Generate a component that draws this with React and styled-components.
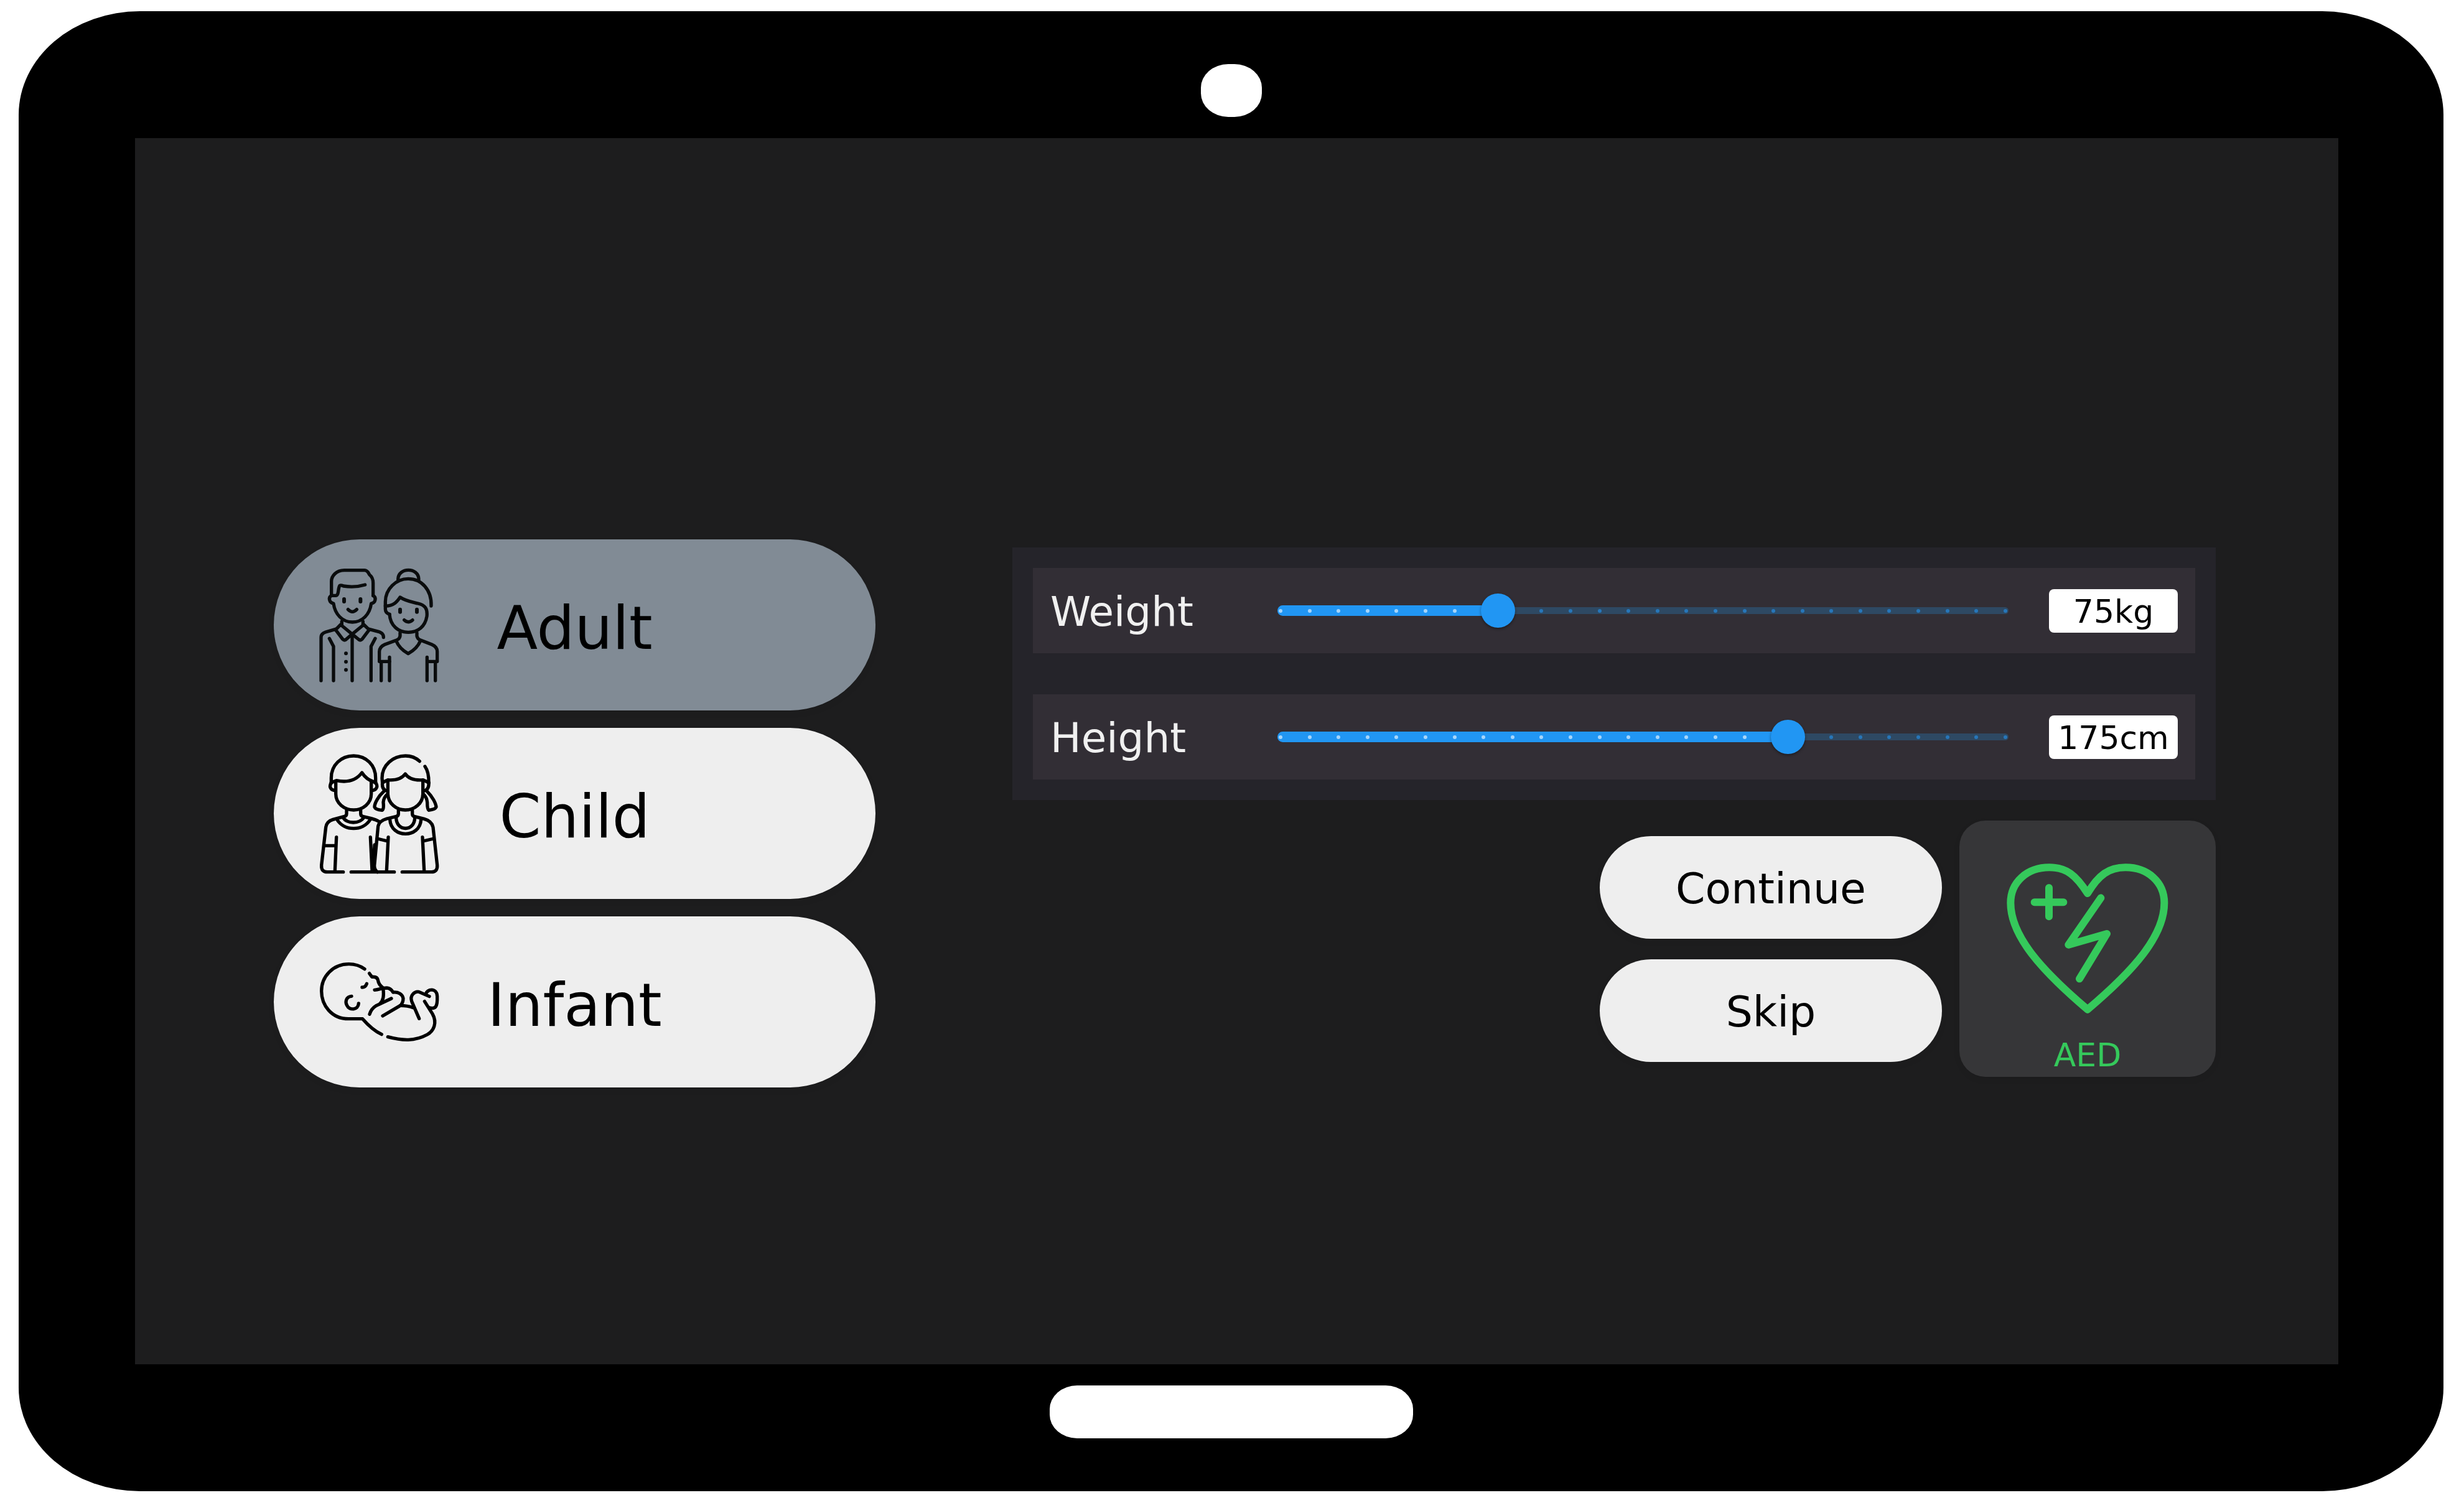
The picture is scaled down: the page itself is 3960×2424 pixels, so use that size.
import React, { useState } from "react";
import styled, { createGlobalStyle } from "styled-components";

const GlobalStyle = createGlobalStyle`
  *, *::before, *::after { box-sizing: border-box; }
  html, body { margin: 0; background: #ffffff; }
  body, button, output, input { font-family: "DejaVu Sans", sans-serif; }
`;

const Page = styled.div`
  display: flex;
  min-height: 100vh;
  padding: 18px 33px 27px 30px;
`;

const Tablet = styled.div`
  flex: 1;
  display: grid;
  grid-template-rows: 204px 1fr 204px;
  padding: 0 169px 0 187px;
  border-radius: 5% / 7%;
  background: #000000;
`;

const Bezel = styled.div`
  display: flex;
  justify-content: center;
  align-items: ${(p) => (p.$edge === "top" ? "flex-end" : "flex-start")};
  padding: 34px 18px 34px 0;
`;

const Cutout = styled.div`
  width: ${(p) => p.$width}px;
  height: 85px;
  border-radius: 44px / 38px;
  background: #ffffff;
`;

const Screen = styled.main`
  display: grid;
  grid-template-columns: minmax(0, 1fr) minmax(0, 2fr);
  column-gap: 220px;
  align-items: center;
  padding: 200px 197px 0 223px;
  background: #1d1d1e;
`;

const OptionList = styled.div`
  display: flex;
  flex-direction: column;
  gap: 28px;
`;

const Option = styled.button`
  display: grid;
  grid-template-columns: 1fr auto 1fr;
  align-items: center;
  height: 275px;
  padding: 0 50px;
  border: 0;
  border-radius: 138px;
  background: ${(p) => (p.$selected ? "#818b95" : "#eeeeee")};
  color: #000000;
  font-size: 96px;
  line-height: 112px;
  box-shadow: 0 4px 12px rgba(0, 0, 0, 0.06);
  cursor: pointer;
`;

const OptionText = styled.span`
  padding-top: 10px;
`;

const LineArt = styled.svg`
  display: block;
  width: 240px;
  height: 220px;
  fill: none;
  stroke: ${(p) => p.$ink};
  stroke-width: 16;
  stroke-linecap: round;
  stroke-linejoin: round;
`;

const Details = styled.div`
  display: flex;
  flex-direction: column;
  gap: 33px;
  padding-bottom: 4px;
`;

const Panel = styled.section`
  display: flex;
  flex-direction: column;
  gap: 66px;
  padding: 33px;
  background: #25242a;
`;

const Row = styled.div`
  display: flex;
  align-items: center;
  height: 137px;
  padding: 0 28px;
  background: #322e35;
`;

const RowLabel = styled.label`
  flex: 0 0 343px;
  padding-top: 4px;
  color: #f0f0f0;
  font-size: 66px;
  line-height: 76px;
`;

const Slider = styled.div`
  flex: 1;
  display: grid;
  align-items: center;
  margin-right: 43px;

  > * { grid-area: 1 / 1; }
`;

const Rail = styled.div`
  height: 11px;
  margin: 0 22px;
  border-radius: 6px;
  background: #2e4963;
`;

const FillLane = styled.div`
  margin: 0 22px;
`;

const Fill = styled.div`
  height: 17px;
  border-radius: 9px;
  background: #2196f3;
`;

const Ticks = styled.div`
  display: flex;
  justify-content: space-between;
  margin: 0 24px;
`;

const Tick = styled.span`
  width: 6px;
  height: 6px;
  border-radius: 50%;
  background: ${(p) => (p.$passed ? "#a6d5fa" : "#2776b9")};
`;

const Range = styled.input`
  appearance: none;
  width: 100%;
  height: 56px;
  margin: 0;
  background: transparent;
  cursor: pointer;

  &::-webkit-slider-runnable-track {
    height: 55px;
    background: transparent;
  }

  &::-webkit-slider-thumb {
    appearance: none;
    width: 55px;
    height: 55px;
    border-radius: 50%;
    background: #2196f3;
    box-shadow: 0 2px 4px rgba(0, 0, 0, 0.4);
  }
`;

const Value = styled.output`
  flex: 0 0 207px;
  height: 70px;
  border-radius: 8px;
  background: #ffffff;
  color: #000000;
  font-size: 52px;
  line-height: 72px;
  text-align: center;
`;

const Actions = styled.div`
  display: flex;
  justify-content: flex-end;
  align-items: center;
  gap: 28px;
`;

const ActionStack = styled.div`
  display: flex;
  flex-direction: column;
  gap: 33px;
`;

const Action = styled.button`
  width: 550px;
  height: 165px;
  padding: 4px 0 0;
  border: 0;
  border-radius: 83px;
  background: #eeeeee;
  color: #000000;
  font-size: 68px;
  box-shadow: 0 4px 12px rgba(0, 0, 0, 0.06);
  cursor: pointer;
`;

const AedCard = styled.button`
  display: flex;
  flex-direction: column;
  align-items: center;
  justify-content: flex-start;
  gap: 28px;
  width: 412px;
  height: 412px;
  padding: 59px 0 0;
  border: 0;
  border-radius: 42px;
  background: #363638;
  color: #35c95b;
  font-size: 52px;
  line-height: 60px;
  box-shadow: 0 4px 12px rgba(0, 0, 0, 0.06);
  cursor: pointer;
`;

const HeartArt = styled.svg`
  display: block;
  width: 280px;
  height: 260px;
  fill: none;
  stroke: currentColor;
  stroke-width: 36;
  stroke-linecap: round;
  stroke-linejoin: round;
`;

const AdultIcon = () => (
  <LineArt $ink="#0a0c0d" viewBox="0 13 720 660" aria-hidden="true">
    {/* man */}
    <path d="M128 200V132C128 105 152 78 190 78H288C303 78 306 92 312 100C325 110 329 122 329 140V200" />
    <path d="M128 200H148C166 200 158 165 168 152Q174 149 186 154Q240 163 290 148" />
    <path d="M128 200C112 208 116 234 138 238C145 290 180 328 229 328C278 328 313 290 320 238C342 234 345 208 329 200" />
    <path strokeWidth="18" d="M189 217v12M268 217v12" />
    <path d="M208 267Q229 289 250 267M178 325V340M280 325V340" />
    <path d="M172 340L148 365L182 410Q190 418 198 412L228 386ZM284 340L310 365L276 410Q268 418 260 412L228 386Z" />
    <path d="M228 386V610M148 362L100 376Q78 383 78 402V610M310 362L355 374Q380 382 379 402" />
    <path d="M118 407L138 445V610M339 407L319 445V610" />
    <g fill="#0a0c0d" stroke="none">
      <circle cx="198" cy="479" r="9" />
      <circle cx="198" cy="519" r="9" />
      <circle cx="198" cy="558" r="9" />
    </g>
    {/* woman */}
    <path d="M449 122C449 62 549 62 549 122" />
    <path d="M408 290Q388 284 388 265V230C388 168 440 119 498 119C562 119 612 172 609 250" />
    <path d="M388 250C430 250 445 228 459 208C485 226 512 230 545 238C580 246 592 264 588 300C580 350 545 377 499 377C450 377 412 345 408 290" />
    <path strokeWidth="18" d="M459 267v12M540 267v12" />
    <path d="M479 318Q498 336 519 318" />
    <path d="M459 380V395Q457 408 444 414L385 436Q360 447 359 470V518H408M540 380V395Q542 408 556 414L612 436Q638 447 638 470V518H590" />
    <path d="M440 418C452 448 480 470 498 480C516 470 545 448 557 418" />
    <path d="M408 497V610M368 520V610M589 497V610M629 520V610" />
  </LineArt>
);

const ChildIcon = () => (
  <LineArt $ink="#000000" viewBox="0 20 720 660" aria-hidden="true">
    {/* boy */}
    <path d="M127 202V178C127 115 175 71 235 71C295 71 341 115 341 178V202" />
    <path d="M127 200C118 215 118 236 147 238M341 200C352 215 350 236 322 238" />
    <path d="M127 200L152 190C200 200 245 192 275 152C290 175 305 187 341 200" />
    <path d="M149 192V255C149 300 190 332 235 332C280 332 320 300 320 255V192" />
    <path d="M201 332V350Q201 362 188 364L135 378Q105 387 101 415L80 598Q78 631 108 631H185" />
    <path d="M269 332V350Q269 362 282 364L320 373Q345 380 358 388" />
    <path d="M155 378C190 435 280 435 315 378M183 368C205 400 262 400 285 368" />
    <path d="M152 463L145 625M95 504H148M316 463L324 625M336 500L330 625M223 631H431" />
    {/* girl */}
    <path d="M374 202L372 178C372 115 425 71 485 71C510 71 535 80 553 97M579 122C592 140 598 170 597 202" />
    <path d="M374 200L400 187C440 190 468 180 484 158C500 182 530 190 570 187L597 200" />
    <path d="M400 190V255C402 300 440 332 484 332C530 332 568 300 569 255V190" />
    <path d="M374 200Q370 235 397 240M597 200Q600 235 573 240" />
    <path d="M380 243C355 265 335 300 336 318Q340 330 372 333Q382 330 378 295Q380 272 396 258M590 243C615 268 632 300 633 318Q628 330 597 333Q590 330 590 295Q588 272 574 258" />
    <path d="M451 332V350Q451 362 438 364L395 374Q358 385 353 410L335 600Q335 622 350 631" />
    <path d="M518 332V350Q518 362 530 364L575 375Q612 385 618 415L638 598Q640 631 610 631H469" />
    <path d="M410 378C415 470 555 470 560 378M440 368C440 438 530 438 530 368" />
    <path d="M402 463L394 625M348 470L398 482M567 463L575 625M622 470L570 482" />
  </LineArt>
);

const InfantIcon = () => (
  <LineArt $ink="#000000" viewBox="0 -1 720 660" aria-hidden="true">
    <path d="M288 169C265 152 240 145 212 145C135 145 80 205 80 275C80 345 130 409 210 409H278C305 440 330 465 370 484" />
    <path d="M311 190L323 207Q350 204 353 225Q355 243 377 260C382 300 378 320 362 336" />
    <path d="M336 270C360 268 370 260 395 260Q415 262 425 281C450 278 470 290 474 310Q474 332 460 345L375 395" />
    <path d="M417 311L345 345Q320 360 312 387M460 345Q495 345 522 355" />
    <path d="M276 257Q292 257 298 240M225 300C200 302 193 325 202 343C215 372 258 366 259 335" />
    <path d="M551 408L515 325C505 295 530 275 550 279L600 301M583 291C588 264 636 258 638 300C640 350 630 365 600 355" />
    <path d="M577 325L615 385C640 430 620 468 590 485C530 518 470 515 400 496" />
  </LineArt>
);

const HeartIcon = () => (
  <HeartArt viewBox="257 230 840 780" aria-hidden="true">
    <path d="M677 404C620 315 575 279 493 279C385 279 306 350 306 450C306 610 455 775 677 964C900 775 1047 610 1047 450C1047 350 968 279 860 279C780 279 730 315 677 404Z" />
    <path d="M491 377V516M421 447H561M741 426L585 652L770 599L638 816" />
  </HeartArt>
);

const PATIENTS = [
  { name: "Adult", Icon: AdultIcon },
  { name: "Child", Icon: ChildIcon },
  { name: "Infant", Icon: InfantIcon },
];

const MAX = 250;
const DIVISIONS = 25;

function Measure({ id, label, unit, initial }) {
  const [value, setValue] = useState(initial);
  const share = value / MAX;
  return (
    <Row>
      <RowLabel htmlFor={id}>{label}</RowLabel>
      <Slider>
        <Rail />
        <FillLane>
          <Fill style={{ width: `${share * 100}%` }} />
        </FillLane>
        <Ticks>
          {Array.from({ length: DIVISIONS + 1 }, (_, i) => (
            <Tick key={i} $passed={i / DIVISIONS <= share} />
          ))}
        </Ticks>
        <Range
          id={id}
          type="range"
          min="0"
          max={MAX}
          value={value}
          onChange={(e) => setValue(Number(e.target.value))}
        />
      </Slider>
      <Value htmlFor={id}>{`${value}${unit}`}</Value>
    </Row>
  );
}

export default function App() {
  const [patient, setPatient] = useState("Adult");
  return (
    <>
      <GlobalStyle />
      <Page>
        <Tablet>
          <Bezel $edge="top">
            <Cutout $width={98} />
          </Bezel>
          <Screen>
            <OptionList>
              {PATIENTS.map(({ name, Icon }) => (
                <Option
                  key={name}
                  type="button"
                  aria-pressed={patient === name}
                  $selected={patient === name}
                  onClick={() => setPatient(name)}
                >
                  <Icon />
                  <OptionText>{name}</OptionText>
                </Option>
              ))}
            </OptionList>
            <Details>
              <Panel>
                <Measure id="weight" label="Weight" unit="kg" initial={75} />
                <Measure id="height" label="Height" unit="cm" initial={175} />
              </Panel>
              <Actions>
                <ActionStack>
                  <Action type="button">Continue</Action>
                  <Action type="button">Skip</Action>
                </ActionStack>
                <AedCard type="button">
                  <HeartIcon />
                  AED
                </AedCard>
              </Actions>
            </Details>
          </Screen>
          <Bezel $edge="bottom">
            <Cutout $width={584} />
          </Bezel>
        </Tablet>
      </Page>
    </>
  );
}
